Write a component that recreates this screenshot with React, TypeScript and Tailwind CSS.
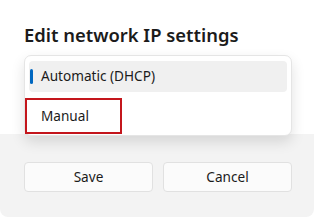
export default function App() {
  return (
    <div
      className="flex h-[217px] w-[314px] flex-col overflow-hidden bg-white text-[#1b1b1b]"
      style={{ fontFamily: '"Noto Sans", "Open Sans", sans-serif' }}
    >
      <div className="h-[134px] pl-6 pr-[22px] pt-[23px]">
        <h1 className="text-[18.4px] font-semibold leading-6">Edit network IP settings</h1>
        <div className="relative z-10 mt-[8px] h-[81px] rounded-[7px] border border-[#e5e5e5] bg-white px-[4px] pt-[5px] shadow-[0_6px_14px_rgba(0,0,0,0.12)]">
          <div className="relative flex h-[31px] items-center rounded-[4px] bg-[#f0f0f0] pl-[12px] text-[13.6px]">
            <span className="absolute left-[1px] top-[8px] h-[15px] w-[3px] rounded-full bg-[#0067c0]" />
            Automatic (DHCP)
          </div>
          <div className="-ml-[4px] mt-[6px] flex h-[36px] w-[97px] items-center border-2 border-[#c4161c] pl-[14px] text-[13.6px]">
            Manual
          </div>
        </div>
      </div>
      <div className="flex flex-1 gap-[10px] rounded-b-[8px] bg-[#f3f3f3] pl-6 pr-[22px] pt-[28px]">
        <button className="h-[30px] flex-1 rounded-[4px] border border-[#e1e1e1] bg-[#fbfbfb] text-[13.6px]">
          Save
        </button>
        <button className="h-[30px] flex-1 rounded-[4px] border border-[#e1e1e1] bg-[#fbfbfb] text-[13.6px]">
          Cancel
        </button>
      </div>
    </div>
  );
}
